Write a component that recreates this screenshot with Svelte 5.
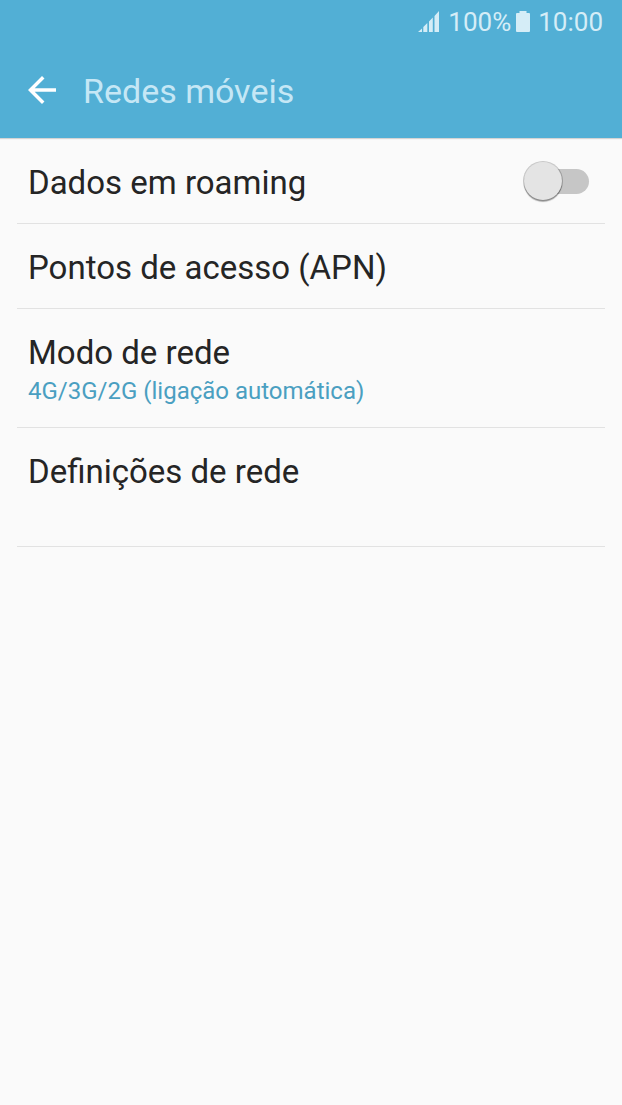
<script lang="ts">
  let roaming = $state(false);

  const items = [
    { title: "Pontos de acesso (APN)" },
    { title: "Modo de rede", summary: "4G/3G/2G (ligação automática)" },
    { title: "Definições de rede", summary: "" },
  ];
</script>

<header>
  <div class="status">
    <svg class="signal" width="22" height="22" viewBox="0 0 22 22" fill="currentColor" aria-hidden="true">
      <path d="M0 21L4 17.500V21ZM5.300 16L9.300 12V21H5.300ZM11 10.500L14.800 6.500V21H11ZM16.500 5L21 0V21H16.500Z" />
    </svg>
    <span>100%</span>
    <svg class="battery" width="14" height="22" viewBox="0 0 14 22" fill="currentColor" aria-hidden="true">
      <path d="M3.500 0H10.500V2H13Q14 2 14 3V20Q14 21 13 21H1Q0 21 0 20V3Q0 2 1 2H3.500Z" />
    </svg>
    <time>10:00</time>
  </div>
  <div class="app-bar">
    <button class="back" aria-label="Voltar">
      <svg width="42" height="42" viewBox="0 0 24 24" fill="currentColor">
        <path d="M20 11H7.830l5.590-5.590L12 4l-8 8 8 8 1.410-1.410L7.830 13H20v-2z" />
      </svg>
    </button>
    <h1>Redes móveis</h1>
  </div>
</header>

<main>
  <ul>
    <li>
      <label class="row" for="roaming">
        <span class="title">Dados em roaming</span>
        <input id="roaming" type="checkbox" role="switch" bind:checked={roaming} />
      </label>
    </li>
    {#each items as item}
      <li>
        <button class="row">
          <span class="text">
            <span class="title">{item.title}</span>
            {#if item.summary !== undefined}
              <span class="summary">{item.summary}</span>
            {/if}
          </span>
        </button>
      </li>
    {/each}
  </ul>
</main>

<style>
  :global(body) {
    margin: 0;
    background: #fafafa;
    font-family: Roboto, "Liberation Sans", sans-serif;
  }

  header {
    background: #52afd5;
    box-shadow: 0 1px 1px rgba(0, 0, 0, 0.15);
  }

  .status {
    display: flex;
    justify-content: flex-end;
    align-items: center;
    height: 44px;
    padding: 0 19px;
    font-size: 26px;
    color: #d5edf7;
  }

  .signal {
    margin-right: 8px;
  }

  .battery {
    margin: 0 8px 0 5px;
  }

  .app-bar {
    display: flex;
    align-items: flex-start;
    gap: 20px;
    padding: 25px 21px;
  }

  .back {
    display: flex;
    color: #fff;
  }

  h1 {
    margin: 0;
    font-size: 34px;
    font-weight: 400;
    line-height: 44px;
    color: #c5e7f5;
  }

  button {
    padding: 0;
    border: none;
    background: none;
    font: inherit;
    text-align: left;
    cursor: pointer;
  }

  ul {
    margin: 0;
    padding: 1px 17px 0;
    list-style: none;
  }

  li {
    border-bottom: 1px solid #e2e2e2;
  }

  .row {
    display: flex;
    justify-content: space-between;
    align-items: flex-start;
    box-sizing: border-box;
    width: 100%;
    padding: 23px 16px 19px 11px;
    cursor: pointer;
  }

  .title {
    display: block;
    font-size: 33px;
    line-height: 42px;
    color: #252525;
  }

  .summary {
    display: block;
    min-height: 34px;
    font-size: 24px;
    line-height: 34px;
    color: #4a9fc1;
  }

  input {
    appearance: none;
    display: grid;
    align-items: center;
    width: 66px;
    height: 38px;
    margin: 0;
    cursor: pointer;
  }

  input::before,
  input::after {
    content: "";
    grid-area: 1 / 1;
  }

  input::before {
    height: 25px;
    margin-left: 8px;
    border-radius: 13px;
    background: #c6c6c6;
  }

  input::after {
    width: 38px;
    height: 38px;
    margin-left: 1px;
    border-radius: 50%;
    background: #e4e4e4;
    box-shadow: 0 0 0 1px rgba(0, 0, 0, 0.2), 0 2px 1px rgba(0, 0, 0, 0.3);
    transition: transform 0.15s;
  }

  input:checked::before {
    background: #a5d3e6;
  }

  input:checked::after {
    background: #52afd5;
    transform: translateX(26px);
  }
</style>
